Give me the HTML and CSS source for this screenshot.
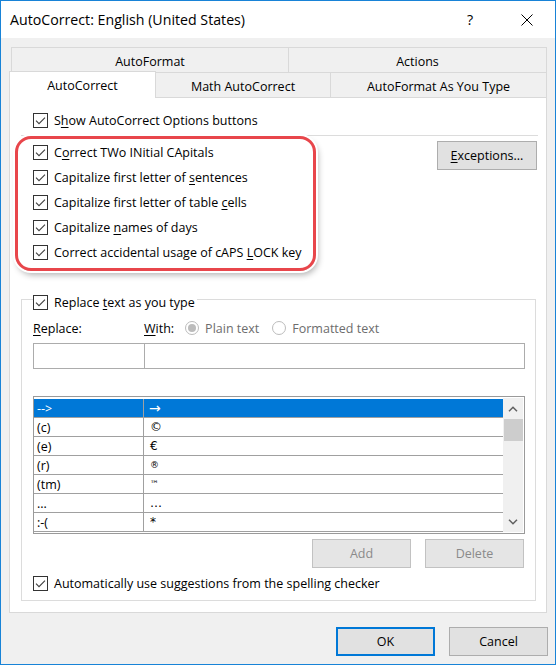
FILE: index.html
```html
<!DOCTYPE html>
<html lang="en">
<head>
<meta charset="utf-8">
<title>AutoCorrect: English (United States)</title>
<link rel="stylesheet" href="styles.css">
</head>
<body>
<svg class="defs" aria-hidden="true">
  <symbol id="tick" viewBox="0 0 15 15">
    <rect x="0.5" y="0.5" width="14" height="14" fill="#fff" stroke="#333"/>
    <path d="M3 7.6 L6 10.6 L12 4.6" fill="none" stroke="#404040" stroke-width="1.1"/>
  </symbol>
</svg>

<div class="window">
  <header class="titlebar">
    <span class="title">AutoCorrect: English (United States)</span>
    <span class="help">?</span>
    <svg class="close" width="12" height="12" viewBox="0 0 12 12">
      <path d="M0.5 0.5 L11.5 11.5 M11.5 0.5 L0.5 11.5" stroke="#000" stroke-width="1"/>
    </svg>
  </header>

  <main class="client">
    <div class="tabs">
      <div class="tabrow back">
        <div class="tab t-autoformat">AutoFormat</div>
        <div class="tab t-actions">Actions</div>
      </div>
      <div class="tabrow front">
        <div class="tab active t-autocorrect">AutoCorrect</div>
        <div class="tab t-math">Math AutoCorrect</div>
        <div class="tab t-asyoutype">AutoFormat As You Type</div>
      </div>
    </div>

    <section class="panel">
      <div class="check-row">
        <svg class="cb"><use href="#tick"/></svg>
        <span>S<u>h</u>ow AutoCorrect Options buttons</span>
      </div>
      <div class="rule"></div>

      <div class="caps">
        <div class="caps-list">
          <div class="check-row"><svg class="cb"><use href="#tick"/></svg><span>C<u>o</u>rrect TWo INitial CApitals</span></div>
          <div class="check-row"><svg class="cb"><use href="#tick"/></svg><span>Capitalize first letter of <u>s</u>entences</span></div>
          <div class="check-row"><svg class="cb"><use href="#tick"/></svg><span>Capitalize first letter of table <u>c</u>ells</span></div>
          <div class="check-row"><svg class="cb"><use href="#tick"/></svg><span>Capitalize <u>n</u>ames of days</span></div>
          <div class="check-row"><svg class="cb"><use href="#tick"/></svg><span>Correct accidental usage of cAPS <u>L</u>OCK key</span></div>
        </div>
        <button class="btn exceptions"><u>E</u>xceptions...</button>
      </div>

      <div class="group">
        <div class="legend">
          <svg class="cb"><use href="#tick"/></svg>
          <span>Replace <u>t</u>ext as you type</span>
        </div>

        <div class="labels">
          <span class="lbl-replace"><u>R</u>eplace:</span>
          <span class="lbl-with"><u>W</u>ith:</span>
          <span class="radio on"></span><span class="radio-text">Plain text</span>
          <span class="radio second"></span><span class="radio-text">Formatted text</span>
        </div>

        <div class="inputs">
          <div class="field field-replace"></div>
          <div class="field field-with"></div>
        </div>

        <div class="list">
          <div class="rows">
            <div class="row selected"><span class="c1">--&gt;</span><span class="c2 arrow">→</span></div>
            <div class="row"><span class="c1">(c)</span><span class="c2">©</span></div>
            <div class="row"><span class="c1">(e)</span><span class="c2">€</span></div>
            <div class="row"><span class="c1">(r)</span><span class="c2 small">®</span></div>
            <div class="row"><span class="c1">(tm)</span><span class="c2 small">™</span></div>
            <div class="row"><span class="c1">...</span><span class="c2">…</span></div>
            <div class="row"><span class="c1">:-(</span><span class="c2">*</span></div>
          </div>
          <div class="scrollbar">
            <div class="sb-btn">
              <svg width="10" height="6" viewBox="0 0 10 6"><path d="M1 5.3 L5 1.3 L9 5.3" fill="none" stroke="#606060" stroke-width="1.5"/></svg>
            </div>
            <div class="sb-thumb"></div>
            <div class="sb-track"></div>
            <div class="sb-btn">
              <svg width="10" height="6" viewBox="0 0 10 6"><path d="M1 0.7 L5 4.7 L9 0.7" fill="none" stroke="#606060" stroke-width="1.5"/></svg>
            </div>
          </div>
        </div>

        <div class="list-actions">
          <button class="btn disabled">Add</button>
          <button class="btn disabled">Delete</button>
        </div>

        <div class="check-row auto">
          <svg class="cb"><use href="#tick"/></svg>
          <span>Automatically use sug<u>g</u>estions from the spelling checker</span>
        </div>
      </div>

      <div class="highlight"></div>
    </section>

    <footer class="dialog-actions">
      <button class="btn default">OK</button>
      <button class="btn">Cancel</button>
    </footer>
  </main>
</div>
</body>
</html>
```

FILE: styles.css
```css
* { box-sizing: border-box; }

html, body {
  margin: 0;
  background: #fff;
}

body {
  font-family: "Open Sans", "Noto Sans", "DejaVu Sans", sans-serif;
  font-size: 12.5px;
  color: #000;
}

.defs {
  position: absolute;
  width: 0;
  height: 0;
  overflow: hidden;
}

u {
  text-decoration: underline;
  text-underline-offset: 2px;
  text-decoration-thickness: 1px;
}

/* dialog frame */
.window {
  width: 556px;
  height: 665px;
  border: 1px solid #1883d7;
  display: flex;
  flex-direction: column;
}

.titlebar {
  height: 37px;
  flex: none;
  background: #fff;
  display: flex;
  align-items: center;
  padding: 0 22px 0 9px;
}

.title {
  font-size: 14.2px;
  padding-bottom: 1px;
}

.help {
  margin-left: auto;
  font-size: 14.2px;
  padding-bottom: 1px;
}

.close {
  margin-left: 48px;
  display: block;
}

.client {
  flex: 1;
  background: #f0f0f0;
  padding: 9px 7px 0 8px;
}

/* tab strip */
.tabrow {
  display: flex;
}

.tab {
  display: flex;
  align-items: center;
  justify-content: center;
  border: 1px solid #d9d9d9;
  border-bottom: none;
  white-space: nowrap;
}

.back {
  margin-left: 2px;
}

.back .tab {
  height: 25px;
  padding-top: 3px;
  border-left: none;
}

.back .t-autoformat {
  width: 278px;
  border-left: 1px solid #d9d9d9;
}

.back .t-actions {
  width: 258px;
}

.front {
  margin-top: -1px;
  height: 27px;
  margin-bottom: -1px;
  position: relative;
  z-index: 1;
}

.front .tab {
  height: 25px;
  margin-top: 1px;
  border-left: none;
  padding-top: 3px;
  background: #f0f0f0;
}

.front .tab.active {
  height: 27px;
  margin-top: 0;
  background: #fff;
  border-left: 1px solid #d9d9d9;
  padding-top: 1px;
}

.t-autocorrect { width: 147px; }
.t-math { width: 175px; }
.t-asyoutype { width: 216px; }

/* page body */
.panel {
  position: relative;
  width: 538px;
  height: 516px;
  background: #fff;
  border: 1px solid #d9d9d9;
  padding: 10px 8px 0 11px;
}

.check-row {
  display: flex;
  align-items: center;
  height: 25px;
  padding-left: 12px;
  gap: 6px;
  white-space: nowrap;
}

.cb {
  width: 15px;
  height: 15px;
  flex: none;
  display: block;
}

.rule {
  height: 1px;
  background: #dcdcdc;
  margin-top: 2px;
}

.caps {
  display: flex;
  justify-content: space-between;
  align-items: flex-start;
  margin-top: 4px;
}

.btn {
  font: inherit;
  color: #000;
  width: 99px;
  height: 29px;
  background: #e1e1e1;
  border: 1px solid #adadad;
  padding: 0 0 1px;
  display: flex;
  align-items: center;
  justify-content: center;
}

.exceptions {
  width: 100px;
  margin-top: 1px;
  margin-right: 1px;
}

/* replace group */
.group {
  margin-top: 34px;
  margin-right: 2px;
  border: 1px solid #dcdcdc;
  padding: 0 10px 7px 11px;
}

.legend {
  display: flex;
  width: max-content;
  align-items: center;
  gap: 6px;
  height: 20px;
  margin-top: -8px;
  padding-right: 2px;
  background: #fff;
}

.labels {
  display: flex;
  align-items: center;
  height: 20px;
  margin-top: 6px;
  white-space: nowrap;
}

.lbl-replace {
  width: 111px;
}

.lbl-with {
  margin-right: 11px;
}

.radio {
  width: 14px;
  height: 14px;
  flex: none;
  border: 1px solid #bcbcbc;
  border-radius: 50%;
  background: #fff;
  position: relative;
}

.radio.on::after {
  content: "";
  position: absolute;
  left: 2px;
  top: 2px;
  width: 8px;
  height: 8px;
  border-radius: 50%;
  background: #bcbcbc;
}

.radio.second {
  margin-left: 13px;
}

.radio-text {
  color: #6d6d6d;
  margin-left: 6px;
}

.inputs {
  display: flex;
  margin-top: 5px;
}

.field {
  height: 26px;
  border: 1px solid #acacac;
  background: #fff;
}

.field-replace { width: 112px; }

.field-with {
  width: 381px;
  margin-left: -1px;
}

/* replacement list */
.list {
  display: flex;
  margin-top: 27px;
  width: 492px;
  height: 138px;
  border: 1px solid #9a9a9a;
  padding: 1px 1px 1px 0;
}

.rows {
  flex: 1;
  padding-top: 1px;
  overflow: hidden;
}

.row {
  display: flex;
  height: 19px;
  border-bottom: 1px solid #a0a0a0;
  align-items: center;
  white-space: nowrap;
}

.row .c1 {
  width: 110px;
  height: 100%;
  padding-left: 3px;
  border-right: 1px solid #a0a0a0;
  display: flex;
  align-items: center;
}

.row .c2 {
  padding-left: 6px;
  font-family: "DejaVu Sans", sans-serif;
  font-size: 12px;
}

.row .c2.arrow {
  font-size: 14px;
  padding-left: 5px;
}

.row .c2.small {
  font-size: 9px;
}

.row.selected {
  background: #0078d7;
  color: #fff;
}

.scrollbar {
  width: 20px;
  flex: none;
  background: #f0f0f0;
  display: flex;
  flex-direction: column;
}

.sb-btn {
  height: 21px;
  display: flex;
  align-items: center;
  justify-content: center;
}

.sb-thumb {
  height: 22px;
  margin: 0 0 0 1px;
  background: #cdcdcd;
}

.sb-track {
  flex: 1;
}

.list-actions {
  display: flex;
  justify-content: flex-end;
  gap: 14px;
  margin-top: 5px;
  padding-right: 1px;
}

.btn.disabled {
  background: #e5e5e5;
  border-color: #c2c2c2;
  color: #8a8a8a;
}

.check-row.auto {
  height: 20px;
  margin-top: 5px;
  padding-left: 0;
}

/* annotation drawn over the capitals options */
.highlight {
  position: absolute;
  left: 5px;
  top: 38px;
  width: 301px;
  height: 135px;
  border: 3px solid #e8464b;
  border-radius: 16px;
  box-shadow: 0 0 0 2px #fff, 2px 4px 6px rgba(0, 0, 0, 0.3);
  pointer-events: none;
}

/* OK / Cancel */
.dialog-actions {
  display: flex;
  justify-content: flex-end;
  gap: 14px;
  margin-top: 14px;
}

.btn.default {
  border: 2px solid #0078d7;
}
```
